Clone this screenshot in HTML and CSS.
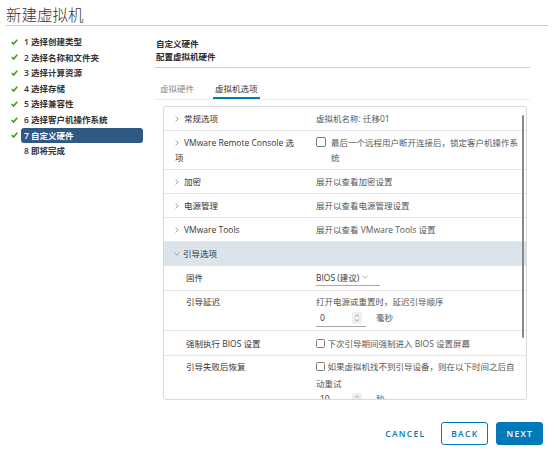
FILE: index.html
```html
<!DOCTYPE html>
<html lang="zh-CN">
<head>
<meta charset="utf-8">
<title>新建虚拟机</title>
<link rel="stylesheet" href="styles.css">
</head>
<body>
<div class="page">
  <h1 class="title">新建虚拟机</h1>
  <div class="main">
    <nav class="steps">
      <div class="step done"><span class="check"><svg width="7" height="6" viewBox="0 0 7 6"><path d="M0.7 3.2 L2.6 5 L6.3 0.8" fill="none" stroke="#3f9a15" stroke-width="1.6"/></svg></span><span class="label">1 选择创建类型</span></div>
      <div class="step done"><span class="check"><svg width="7" height="6" viewBox="0 0 7 6"><path d="M0.7 3.2 L2.6 5 L6.3 0.8" fill="none" stroke="#3f9a15" stroke-width="1.6"/></svg></span><span class="label">2 选择名称和文件夹</span></div>
      <div class="step done"><span class="check"><svg width="7" height="6" viewBox="0 0 7 6"><path d="M0.7 3.2 L2.6 5 L6.3 0.8" fill="none" stroke="#3f9a15" stroke-width="1.6"/></svg></span><span class="label">3 选择计算资源</span></div>
      <div class="step done"><span class="check"><svg width="7" height="6" viewBox="0 0 7 6"><path d="M0.7 3.2 L2.6 5 L6.3 0.8" fill="none" stroke="#3f9a15" stroke-width="1.6"/></svg></span><span class="label">4 选择存储</span></div>
      <div class="step done"><span class="check"><svg width="7" height="6" viewBox="0 0 7 6"><path d="M0.7 3.2 L2.6 5 L6.3 0.8" fill="none" stroke="#3f9a15" stroke-width="1.6"/></svg></span><span class="label">5 选择兼容性</span></div>
      <div class="step done"><span class="check"><svg width="7" height="6" viewBox="0 0 7 6"><path d="M0.7 3.2 L2.6 5 L6.3 0.8" fill="none" stroke="#3f9a15" stroke-width="1.6"/></svg></span><span class="label">6 选择客户机操作系统</span></div>
      <div class="step done active"><span class="check"><svg width="7" height="6" viewBox="0 0 7 6"><path d="M0.7 3.2 L2.6 5 L6.3 0.8" fill="none" stroke="#3f9a15" stroke-width="1.6"/></svg></span><span class="label">7 自定义硬件</span></div>
      <div class="step"><span class="check"></span><span class="label">8 即将完成</span></div>
    </nav>
    <section class="content">
      <div class="heading">
        <div class="h-title">自定义硬件</div>
        <div class="h-sub">配置虚拟机硬件</div>
      </div>
      <div class="tabs">
        <span class="tab">虚拟硬件</span>
        <span class="tab active">虚拟机选项</span>
      </div>
      <div class="table">
        <div class="row">
          <div class="cell-l"><svg class="chev" width="4" height="6" viewBox="0 0 4 6"><path d="M0.6 0.6 L3.2 3 L0.6 5.4" fill="none" stroke="#9a9a9a" stroke-width="0.9"/></svg>常规选项</div>
          <div class="cell-v">虚拟机名称: 迁移01</div>
        </div>
        <div class="row">
          <div class="cell-l"><svg class="chev" width="4" height="6" viewBox="0 0 4 6"><path d="M0.6 0.6 L3.2 3 L0.6 5.4" fill="none" stroke="#9a9a9a" stroke-width="0.9"/></svg><span class="nowrap">VMware Remote Console 选</span><br>项</div>
          <div class="cell-v check-row"><span class="cbox"></span><span>最后一个远程用户断开连接后，锁定客户机操作系<br>统</span></div>
        </div>
        <div class="row">
          <div class="cell-l"><svg class="chev" width="4" height="6" viewBox="0 0 4 6"><path d="M0.6 0.6 L3.2 3 L0.6 5.4" fill="none" stroke="#9a9a9a" stroke-width="0.9"/></svg>加密</div>
          <div class="cell-v">展开以查看加密设置</div>
        </div>
        <div class="row">
          <div class="cell-l"><svg class="chev" width="4" height="6" viewBox="0 0 4 6"><path d="M0.6 0.6 L3.2 3 L0.6 5.4" fill="none" stroke="#9a9a9a" stroke-width="0.9"/></svg>电源管理</div>
          <div class="cell-v">展开以查看电源管理设置</div>
        </div>
        <div class="row">
          <div class="cell-l"><svg class="chev" width="4" height="6" viewBox="0 0 4 6"><path d="M0.6 0.6 L3.2 3 L0.6 5.4" fill="none" stroke="#9a9a9a" stroke-width="0.9"/></svg>VMware Tools</div>
          <div class="cell-v">展开以查看 VMware Tools 设置</div>
        </div>
        <div class="row open">
          <div class="cell-l"><svg class="chev" width="6" height="4" viewBox="0 0 6 4"><path d="M0.6 0.6 L3 3.2 L5.4 0.6" fill="none" stroke="#9a9a9a" stroke-width="0.9"/></svg>引导选项</div>
          <div class="cell-v"></div>
        </div>
        <div class="row sub">
          <div class="cell-l">固件</div>
          <div class="cell-v"><span class="select">BIOS (建议)<svg width="6" height="4" viewBox="0 0 6 4"><path d="M0.5 0.6 L3 3.2 L5.5 0.6" fill="none" stroke="#9a9a9a" stroke-width="0.8"/></svg></span></div>
        </div>
        <div class="row sub delay">
          <div class="cell-l">引导延迟</div>
          <div class="cell-v">
            <div>打开电源或重置时，延迟引导顺序</div>
            <div class="num-row">
              <span class="num">0<span class="spin"><svg width="6" height="10" viewBox="0 0 6 10"><path d="M1 3.6 L3 1.8 L5 3.6 M1 6.4 L3 8.2 L5 6.4" fill="none" stroke="#9a9a9a" stroke-width="0.8"/></svg></span></span>
              <span class="unit">毫秒</span>
            </div>
          </div>
        </div>
        <div class="row sub force">
          <div class="cell-l">强制执行 BIOS 设置</div>
          <div class="cell-v"><span class="cbox small"></span>下次引导期间强制进入 BIOS 设置屏幕</div>
        </div>
        <div class="row sub retry">
          <div class="cell-l">引导失败后恢复</div>
          <div class="cell-v">
            <div><span class="cbox small"></span>如果虚拟机找不到引导设备，则在以下时间之后自<br>动重试</div>
            <div class="num-row">
              <span class="num">10<span class="spin"><svg width="6" height="10" viewBox="0 0 6 10"><path d="M1 3.6 L3 1.8 L5 3.6 M1 6.4 L3 8.2 L5 6.4" fill="none" stroke="#9a9a9a" stroke-width="0.8"/></svg></span></span>
              <span class="unit">秒</span>
            </div>
          </div>
        </div>
        <div class="scrollbar"></div>
      </div>
    </section>
  </div>
  <footer class="actions">
    <button class="btn link">CANCEL</button>
    <button class="btn outline">BACK</button>
    <button class="btn primary">NEXT</button>
  </footer>
</div>
</body>
</html>
```
FILE: styles.css
```css
* { box-sizing: border-box; }

body {
  margin: 0;
  background: #fff;
  color: #333;
  font-family: "Open Sans", "Noto Sans CJK SC", sans-serif;
  font-size: 8.5px;
}

.page {
  width: 554px;
  padding: 4px 6px 0;
}

.title {
  margin: 0;
  font-family: "Noto Sans CJK SC", sans-serif;
  font-size: 15.5px;
  font-weight: 300;
  line-height: 21px;
  color: #333;
  border-bottom: 1px solid #c9c9c9;
}

.main {
  display: grid;
  grid-template-columns: 149px 1fr;
}

/* steps */
.steps {
  padding-top: 8px;
}

.step {
  display: flex;
  align-items: center;
  height: 15.6px;
}

.check {
  width: 15px;
  padding-left: 5px;
  display: flex;
  align-items: center;
}

.label {
  flex: 0 0 122px;
  padding-left: 3px;
  line-height: 15.6px;
  border-radius: 3px;
  font-weight: 600;
  color: #333;
  white-space: nowrap;
}

.step.active .label {
  background: #2f5883;
  color: #fff;
}

/* content */
.heading {
  padding: 10.6px 0 4px 1px;
  margin-right: 18px;
  border-bottom: 1px solid #cfcfcf;
  line-height: 13.4px;
  font-weight: 600;
  color: #2b2b2b;
}

.tabs {
  display: flex;
  gap: 17px;
  margin-top: 12.5px;
  margin-right: 18px;
  padding-left: 3px;
  border-bottom: 1px solid #ececec;
}

.tab {
  padding: 0 2px;
  line-height: 16px;
  border-bottom: 2px solid transparent;
  color: #8c8c8c;
}

.tab.active {
  color: #333;
  border-bottom-color: #0079b8;
}

.table {
  position: relative;
  margin: 6px 0 0 8px;
  width: 363.5px;
  height: 294px;
  border: 1px solid #d9d9d9;
  border-radius: 3px;
  overflow: hidden;
}

.row {
  display: grid;
  grid-template-columns: 146px 1fr;
  border-bottom: 1px solid #e6e6e6;
}

.cell-l {
  padding: 4px 8px 4px 11px;
  line-height: 15px;
  color: #333;
}

.cell-v {
  padding: 4px 6px;
  line-height: 15px;
  color: #575757;
}

.chev {
  margin-right: 5px;
  vertical-align: middle;
  position: relative;
  top: -1px;
}

.open .chev { margin-right: 3px; margin-left: -1px; }

.nowrap { white-space: nowrap; }

.row.open {
  background: #dbe4ea;
}

.check-row {
  display: flex;
  gap: 5px;
}

.cbox {
  flex: 0 0 10px;
  width: 10px;
  height: 10px;
  margin-top: 2.5px;
  border: 1px solid #7a7a7a;
  border-radius: 2px;
  background: #fff;
}

.cbox.small {
  display: inline-block;
  width: 9px;
  height: 9px;
  margin: 0 2.5px 0 0;
  border-radius: 1.5px;
  vertical-align: -1.5px;
}

.sub .cell-l {
  padding-left: 22px;
}

.select {
  display: inline-flex;
  align-items: center;
  gap: 3px;
  width: 64px;
  line-height: 15px;
  border-bottom: 1px solid #a8a8a8;
  color: #333;
}

.delay .cell-l,
.delay .cell-v {
  padding-top: 3px;
  padding-bottom: 3px;
  line-height: 16px;
}

.num-row {
  display: flex;
  align-items: center;
  height: 17px;
}

.num {
  display: flex;
  align-items: center;
  justify-content: space-between;
  width: 50px;
  height: 17px;
  padding: 0 4px 0 4px;
  border-bottom: 1px solid #a8a8a8;
  color: #333;
}

.spin {
  display: flex;
  align-items: center;
  justify-content: center;
  width: 10px;
  height: 12px;
  background: #eeeeee;
  border-radius: 2px;
}

.unit {
  margin-left: 10px;
}

.force .cell-l,
.force .cell-v {
  padding-top: 5px;
}

.retry .cell-l,
.retry .cell-v {
  padding-top: 3px;
  line-height: 16.6px;
}

.retry .num-row { height: 15px; }

.scrollbar {
  position: absolute;
  top: 8px;
  right: 2px;
  width: 1.5px;
  height: 223px;
  background: #8a8a8a;
  border-radius: 1px;
}

/* footer */
.actions {
  display: flex;
  justify-content: flex-end;
  margin-top: 21.7px;
  padding-right: 4.7px;
}

.btn {
  height: 23px;
  width: 47px;
  padding: 0;
  font-family: "Open Sans", sans-serif;
  font-size: 8.5px;
  font-weight: 600;
  letter-spacing: 1.3px;
  border-radius: 3px;
  border: 1px solid transparent;
  background: none;
  color: #0079b8;
}

.btn.link {
  width: 48px;
  margin-right: 12px;
}

.btn.outline {
  border-color: #0079b8;
  margin-right: 8px;
}

.btn.primary {
  background: #0079b8;
  border-color: #0079b8;
  color: #fff;
}
```
